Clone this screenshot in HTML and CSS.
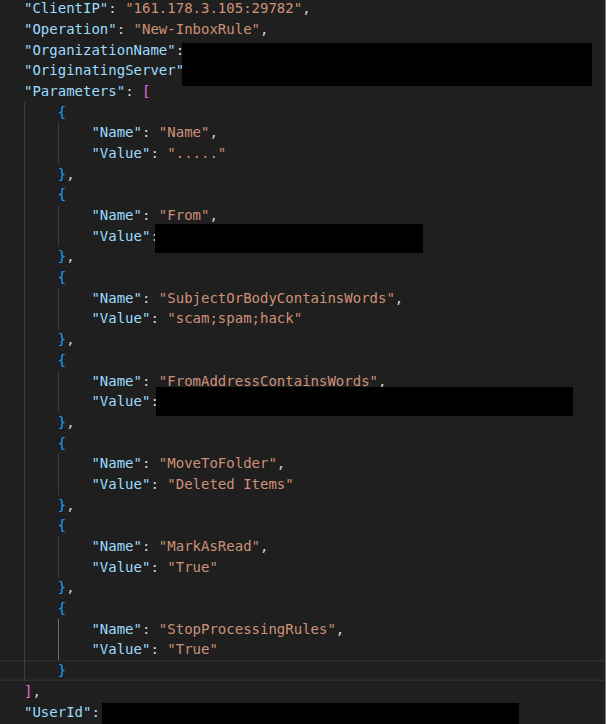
FILE: index.html
```html
<!DOCTYPE html>
<html>
<head>
<meta charset="utf-8">
<link rel="stylesheet" href="styles.css">
</head>
<body>
<div class="editor">
  <div class="code">
    <div class="ln"><span class="k">"ClientIP"</span><span class="p">: </span><span class="s">"161.178.3.105:29782"</span><span class="p">,</span></div>
    <div class="ln"><span class="k">"Operation"</span><span class="p">: </span><span class="s">"New-InboxRule"</span><span class="p">,</span></div>
    <div class="ln"><span class="k">"OrganizationName"</span><span class="p">: </span><span class="redact r-org"></span></div>
    <div class="ln"><span class="k">"OriginatingServer"</span><span class="p">: </span></div>
    <div class="ln"><span class="k">"Parameters"</span><span class="p">: </span><span class="b2">[</span></div>

    <div class="ln"><span class="g"></span><span class="b3">{</span></div>
    <div class="ln"><span class="g"></span><span class="g"></span><span class="k">"Name"</span><span class="p">: </span><span class="s">"Name"</span><span class="p">,</span></div>
    <div class="ln"><span class="g"></span><span class="g"></span><span class="k">"Value"</span><span class="p">: </span><span class="s">"....."</span></div>
    <div class="ln"><span class="g"></span><span class="b3">}</span><span class="p">,</span></div>

    <div class="ln"><span class="g"></span><span class="b3">{</span></div>
    <div class="ln"><span class="g"></span><span class="g"></span><span class="k">"Name"</span><span class="p">: </span><span class="s">"From"</span><span class="p">,</span></div>
    <div class="ln"><span class="g"></span><span class="g"></span><span class="k">"Value"</span><span class="p">: </span><span class="redact r-from"></span></div>
    <div class="ln"><span class="g"></span><span class="b3">}</span><span class="p">,</span></div>

    <div class="ln"><span class="g"></span><span class="b3">{</span></div>
    <div class="ln"><span class="g"></span><span class="g"></span><span class="k">"Name"</span><span class="p">: </span><span class="s">"SubjectOrBodyContainsWords"</span><span class="p">,</span></div>
    <div class="ln"><span class="g"></span><span class="g"></span><span class="k">"Value"</span><span class="p">: </span><span class="s">"scam;spam;hack"</span></div>
    <div class="ln"><span class="g"></span><span class="b3">}</span><span class="p">,</span></div>

    <div class="ln"><span class="g"></span><span class="b3">{</span></div>
    <div class="ln"><span class="g"></span><span class="g"></span><span class="k">"Name"</span><span class="p">: </span><span class="s">"FromAddressContainsWords"</span><span class="p">,</span></div>
    <div class="ln"><span class="g"></span><span class="g"></span><span class="k">"Value"</span><span class="p">: </span><span class="redact r-addr"></span></div>
    <div class="ln"><span class="g"></span><span class="b3">}</span><span class="p">,</span></div>

    <div class="ln"><span class="g"></span><span class="b3">{</span></div>
    <div class="ln"><span class="g"></span><span class="g"></span><span class="k">"Name"</span><span class="p">: </span><span class="s">"MoveToFolder"</span><span class="p">,</span></div>
    <div class="ln"><span class="g"></span><span class="g"></span><span class="k">"Value"</span><span class="p">: </span><span class="s">"Deleted Items"</span></div>
    <div class="ln"><span class="g"></span><span class="b3">}</span><span class="p">,</span></div>

    <div class="ln"><span class="g"></span><span class="b3">{</span></div>
    <div class="ln"><span class="g"></span><span class="g"></span><span class="k">"Name"</span><span class="p">: </span><span class="s">"MarkAsRead"</span><span class="p">,</span></div>
    <div class="ln"><span class="g"></span><span class="g"></span><span class="k">"Value"</span><span class="p">: </span><span class="s">"True"</span></div>
    <div class="ln"><span class="g"></span><span class="b3">}</span><span class="p">,</span></div>

    <div class="ln"><span class="g"></span><span class="b3">{</span></div>
    <div class="ln"><span class="g"></span><span class="g active"></span><span class="k">"Name"</span><span class="p">: </span><span class="s">"StopProcessingRules"</span><span class="p">,</span></div>
    <div class="ln"><span class="g"></span><span class="g active"></span><span class="k">"Value"</span><span class="p">: </span><span class="s">"True"</span></div>
    <div class="ln current"><span class="g"></span><span class="b3">}</span></div>

    <div class="ln"><span class="b2">]</span><span class="p">,</span></div>
    <div class="ln"><span class="k">"UserId"</span><span class="p">: </span><span class="redact r-user"></span></div>
  </div>
</div>
</body>
</html>
```

FILE: styles.css
```css
html, body {
  margin: 0;
  padding: 0;
  background: #1f1f1f;
}

body {
  width: 606px;
  height: 724px;
  overflow: hidden;
}

.editor {
  box-sizing: border-box;
  width: 606px;
  height: 724px;
  background: #1f1f1f;
  border-right: 1px solid #7a7a7a;
  overflow: hidden;
}

.code {
  margin-top: -1.85px;
  font-family: "DejaVu Sans Mono", "Liberation Mono", monospace;
  font-size: 14px;
  line-height: 20.7px;
  color: #d4d4d4;
}

.ln {
  position: relative;
  height: 20.7px;
  padding-left: 24px;
  white-space: pre;
}

.ln.current {
  box-shadow: inset 0 1.5px 0 #2e2e2e, inset 0 -1.5px 0 #2e2e2e;
}

.g {
  display: inline-block;
  box-sizing: border-box;
  width: 4ch;
  height: 20.7px;
  vertical-align: top;
  border-left: 1px solid #3c3c3c;
}

.g.active {
  border-left-color: #6e6e6e;
}

.k { color: #9cdcfe; }
.s { color: #ce9178; }
.p { color: #d4d4d4; }
.b2 { color: #da70d6; }
.b3 { color: #179fff; }

.redact {
  position: absolute;
  z-index: 2;
  background: #000;
}

.r-org {
  left: 182px;
  top: 3.5px;
  width: 410px;
  height: 43px;
}

.r-from {
  left: 155px;
  top: -2px;
  width: 268px;
  height: 29px;
}

.r-addr {
  left: 156px;
  top: -4.5px;
  width: 417px;
  height: 29px;
}

.r-user {
  left: 102px;
  top: 1px;
  width: 417px;
  height: 30px;
}
```
